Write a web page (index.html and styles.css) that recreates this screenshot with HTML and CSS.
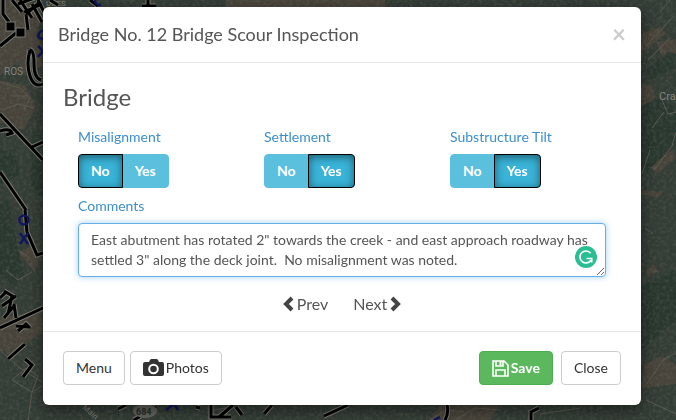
FILE: index.html
```
<!DOCTYPE html>
<html lang="en">
<head>
  <meta charset="UTF-8">
  <meta name="viewport" content="width=device-width, initial-scale=1">
  <title>Bridge Scour Inspection</title>
  <link rel="stylesheet" href="styles.css">
</head>
<body>

<!-- Map behind the dialog -->
<svg class="map" viewBox="0 0 676 420" preserveAspectRatio="xMidYMid slice" aria-hidden="true">
  <defs>
    <filter id="grain" x="0" y="0" width="100%" height="100%" color-interpolation-filters="sRGB">
      <feTurbulence type="fractalNoise" baseFrequency="0.3" numOctaves="3" seed="4"/>
      <feColorMatrix values="0 0 0 0 0.45  0 0 0 0 0.48  0 0 0 0 0.43  2 0 0 0 -0.8"/>
    </filter>
  </defs>
  <rect width="676" height="420" fill="#333c35"/>
  <!-- fields and woods -->
  <g fill="#48433a">
    <path d="M0 0h28l12 22-8 28-32 26z"/>
    <path d="M0 80l26 6 10 20-12 24-24-8z"/>
    <path d="M16 44l24-8 3 30-22 8z"/>
    <path d="M0 262l14 14 2 12-16-16z"/>
    <path d="M18 252l14-6 8 12-6 14z"/>
    <path d="M0 318l40-8 3 20-30 26-13-6z"/>
    <path d="M225 0h160v7H225z"/>
    <path d="M641 34l20-8 4 8-24 20z"/>
    <path d="M656 42l20-3v16l-14 2z"/>
    <path d="M641 86l10-2 4 14-14 10z"/>
    <path d="M650 166l22-16 4 8-20 16z"/>
    <path d="M642 190l20 2-4 6-16-4z"/>
    <path d="M646 270l8-6 4 8-10 4z"/>
    <path d="M644 364l18-8 14 8v20l-34 4z"/>
    <path d="M440 405h60l-10 15h-60z"/>
  </g>
  <g fill="#29372f">
    <path d="M0 205l8-6 8 40 8 36-10 12-14-14z"/>
    <path d="M32 130l11 8v60l-12-10z"/>
    <path d="M0 150l14 4 6 20-20 10z"/>
    <path d="M646 70l22-18 8 2v12l-24 14z"/>
    <path d="M641 106l18-8 17 10v34l-35 36z"/>
    <path d="M641 286l35-16v50l-35 30z"/>
  </g>
  <g fill="none" stroke="#5a5950" stroke-width="1">
    <path d="M0 82l20 6 10 10-6 12M2 110l16-6 16 4M12 96l16 0M6 270l12 10 14-8M18 250l12 8"/>
    <path d="M0 350l20 18 22 14M12 380l14-12 12 8-6 16zM28 420l4-28 10-6"/>
    <path d="M646 46l28-30M648 60l22-22M662 100l6 14 8-2M654 170l18-24 4-14M650 150l-8 24"/>
    <path d="M652 128l12-16M660 12l10-12M645 228l8 6M646 385l18-26 12-6M646 400l30 14"/>
    <path d="M430 420l16-10 18 2M455 420l20-12 25 2M540 414l40-6M210 411l20-4"/>
  </g>
  <rect width="676" height="420" filter="url(#grain)" opacity="0.3"/>
  <!-- place names -->
  <g class="map-names" font-size="10">
    <text x="4" y="75">ROS</text>
    <text x="659" y="100" font-size="11">Cra</text>
    <text x="46" y="6" font-size="8">UDES</text>
    <text x="82" y="408" font-size="8" transform="rotate(42 82 408)">Main</text>
  </g>
  <!-- roads -->
  <g class="road-edge">
    <path id="roads" d="M3 0v14l6 8M12 0l10 12M20 0l12 18M18 4l22-8M26 14l14-12M26 14l2 16M32 4l10 18M38 0l6 12M24 12l18-8
      M0 46l16-13M30 50q-4 14 0 26t13 8M30 50q4 0 4 14t7 16M0 114l43 46M32 147l11-5M0 131q10-3 12 2l-6 2M0 172l26 38
      M25 210l2 22 10 23 6-2M0 328l43-20M0 298l6-6M4 291l10 6M2 306l14-10M4 318l10-12M12 296l-4 18M14 304l2 14
      M16 326l12 1M18 331l8-7 4 4M8 359l17-15M25 359l7 6-9 12
      M148 0v7M142 6h14M50 0l8 5M90 0l8 6M118 409l8-4M134 420l22-13M196 407l4 1M211 405v12h20M219 417l14-12M236 407l6 8
      M264 414l8-9M324 416l24-11M447 405q2 8-2 15M531 420v-8l8-4"/>
  </g>
  <use href="#roads" class="road"/>
  <rect x="6" y="22" width="9" height="9" stroke="#77776f" stroke-width="1"/>
  <rect x="16" y="28" width="9" height="9" stroke="#77776f" stroke-width="1"/>
  <ellipse cx="145" cy="411" rx="12" ry="7" fill="#65665f"/>
  <text x="136" y="415" class="route">684</text>
  <!-- bridge markers -->
  <g fill="none" stroke="#10165f" stroke-width="2.5">
    <circle cx="24" cy="220" r="4.5"/>
    <path d="M20 233l8 11M28 233l-8 11M38 46l5 5-5 6M43 30q-6 3-4 8l4 1M95 0q0 5 6 5M166 410l8-6 4 6M434 420l6-3"/>
  </g>
</svg>

<div class="modal">
  <form class="modal-dialog" role="dialog" aria-labelledby="modalTitle">
    <div class="modal-header">
      <h1 class="modal-title" id="modalTitle">Bridge No. 12 Bridge Scour Inspection</h1>
      <button type="button" class="close" aria-label="Close dialog">×</button>
    </div>

    <div class="modal-body">
      <h2>Bridge</h2>
      <div class="fields">
        <div class="field-row">
          <fieldset>
            <legend>Misalignment</legend>
            <div class="btn-group">
              <label><input type="radio" name="misalignment" value="no" checked><span>No</span></label>
              <label><input type="radio" name="misalignment" value="yes"><span>Yes</span></label>
            </div>
          </fieldset>
          <fieldset>
            <legend>Settlement</legend>
            <div class="btn-group">
              <label><input type="radio" name="settlement" value="no"><span>No</span></label>
              <label><input type="radio" name="settlement" value="yes" checked><span>Yes</span></label>
            </div>
          </fieldset>
          <fieldset>
            <legend>Substructure Tilt</legend>
            <div class="btn-group">
              <label><input type="radio" name="tilt" value="no"><span>No</span></label>
              <label><input type="radio" name="tilt" value="yes" checked><span>Yes</span></label>
            </div>
          </fieldset>
        </div>

        <label class="field-label" for="comments">Comments</label>
        <div class="comment-box">
          <textarea id="comments" rows="2" spellcheck="false">East abutment has rotated 2" towards the creek - and east approach roadway has settled 3" along the deck joint.  No misalignment was noted.</textarea>
          <svg class="checker" viewBox="0 0 22 22" aria-hidden="true">
            <circle cx="11" cy="11" r="11" fill="#2bbd93"/>
            <path d="M15.6 7.2A6 6 0 1 0 16 14.2M11.5 12.5h5.2v4" fill="none" stroke="#fff" stroke-width="1.7"/>
          </svg>
        </div>
      </div>

      <nav class="pager">
        <a href="#prev"><svg viewBox="0 0 11 16" aria-hidden="true"><path d="M9 2L3 8l6 6"/></svg>Prev</a>
        <a href="#next">Next<svg viewBox="0 0 11 16" aria-hidden="true"><path d="M2 2l6 6-6 6"/></svg></a>
      </nav>
    </div>

    <div class="modal-footer">
      <div class="footer-left">
        <button type="button" class="btn">Menu</button>
        <button type="button" class="btn">
          <svg class="camera" viewBox="0 0 21 18" aria-hidden="true">
            <path d="M2 3h4l1-2q.5-1 1.500-1h5q1 0 1.500 1l1 2h3q2 0 2 2v10q0 2-2 2H2q-2 0-2-2V5q0-2 2-2z" fill="#333"/>
            <circle cx="10.500" cy="10" r="4.300" fill="none" stroke="#fff" stroke-width="2"/>
          </svg>Photos
        </button>
      </div>
      <div class="footer-right">
        <button type="submit" class="btn btn-save">
          <svg class="floppy" viewBox="0 0 17 17" aria-hidden="true">
            <path d="M1 1h11l4 4v11H1zM4 1v5h7V1M4 16v-6h9v6" fill="none" stroke="#fff" stroke-width="1.600"/>
            <path d="M7.500 1h2v4h-2z" fill="#fff"/>
          </svg>Save
        </button>
        <button type="button" class="btn">Close</button>
      </div>
    </div>
  </form>
</div>

</body>
</html>
```
FILE: styles.css
```
* { box-sizing: border-box; }
body {
  margin: 0;
  font-family: Lato, "Liberation Sans", sans-serif;
  font-size: 14px;
  line-height: 20px;
  color: #555;
  background: #333c35;
}

/* map */
.map { position: fixed; inset: 0; width: 100%; height: 100%; }
.map-names { fill: #85857c; font-family: Roboto, sans-serif; }
.route { fill: #292d29; font: bold 9px Roboto, sans-serif; }
.road-edge { fill: none; stroke: #7a7a72; stroke-width: 5; }
.road { fill: none; stroke: #000; stroke-width: 3; }

/* dialog */
.modal { position: relative; padding: 7px 8px 15px 16px; }
.modal-dialog {
  max-width: 598px;
  margin: 0 auto;
  background: white;
  border-radius: 6px;
  box-shadow: 0 5px 15px rgba(0,0,0,0.5);
}
.modal-header {
  display: flex;
  align-items: center;
  justify-content: space-between;
  padding: 15px 15px 16px;
  border-bottom: 1px solid #e5e5e5;
}
.modal-title { margin: 0; font-size: 18px; font-weight: 400; line-height: 24px; }
.close {
  padding: 0;
  border: none;
  background: none;
  color: #ccc;
  font: 700 24px/24px Lato, sans-serif;
}
.modal-body { padding: 20px 20px 15px; }
.modal-body h2 { margin: 0 0 16px; font-size: 24px; font-weight: 400; line-height: 28px; }

.fields { padding: 0 15px; }
.field-row {
  display: grid;
  grid-template-columns: repeat(3, 1fr);
  gap: 30px;
  margin-bottom: 8px;
}
fieldset { min-width: 0; margin: 0; padding: 0; border: none; }
legend, .field-label { display: block; margin-bottom: 7px; padding: 0; color: #3b8fcb; }

.btn-group { display: flex; }
.btn-group input { position: absolute; opacity: 0; }
.btn-group span {
  display: block;
  position: relative;
  padding: 6px 12px;
  border: 1px solid #5bc0de;
  background: #5bc0de;
  color: white;
  font-weight: 700;
}
.btn-group label:first-child span { border-radius: 4px 0 0 4px; }
.btn-group label:last-child span { margin-left: -1px; border-radius: 0 4px 4px 0; }
.btn-group input:checked + span {
  z-index: 1;
  border-color: #000;
  background: #39b3d7;
  box-shadow: inset 0 2px 8px rgba(0,0,0,0.5);
}

.comment-box { position: relative; }
textarea {
  display: block;
  width: 100%;
  min-height: 54px;
  padding: 6px 12px;
  border: 1px solid #66afe9;
  border-radius: 4px;
  outline: none;
  box-shadow: 0 0 6px rgba(102,175,233,0.6);
  color: #555;
  font: inherit;
  resize: vertical;
  overflow: hidden;
}
.checker { position: absolute; right: 9px; bottom: 9px; width: 22px; height: 22px; }

.pager { display: flex; justify-content: center; gap: 25px; margin-top: 15px; }
.pager a {
  display: flex;
  align-items: center;
  gap: 3px;
  color: #555;
  font-size: 16px;
  line-height: 24px;
  text-decoration: none;
}
.pager svg { width: 11px; height: 16px; fill: none; stroke: #444; stroke-width: 4; }

.modal-footer {
  display: flex;
  justify-content: space-between;
  padding: 19px 20px 20px;
  border-top: 1px solid #e5e5e5;
}
.footer-left { display: flex; gap: 5px; }
.footer-right { display: flex; gap: 8px; }
.btn {
  display: flex;
  align-items: center;
  gap: 2px;
  padding: 6px 12px;
  border: 1px solid #ccc;
  border-radius: 4px;
  background: white;
  color: #333;
  font: inherit;
}
.btn-save { border-color: #4cae4c; background: #5cb85c; color: white; font-weight: 700; }
.camera { width: 21px; height: 18px; }
.floppy { width: 17px; height: 17px; }
```
